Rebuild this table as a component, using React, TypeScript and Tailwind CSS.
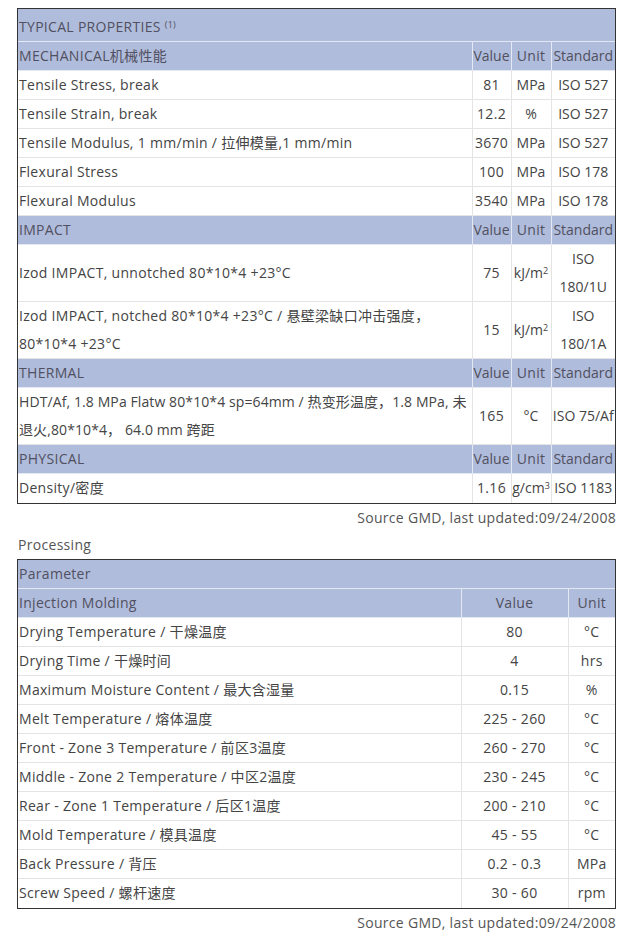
import React from "react";

const FONT = { fontFamily: '"Open Sans", "Noto Sans CJK SC", sans-serif' };

type Row =
  | { kind: "head"; label: React.ReactNode }
  | { kind: "data"; label: React.ReactNode; value: string; unit: React.ReactNode; std: React.ReactNode; tall?: boolean; tight?: boolean };

const rows1: Row[] = [
  { kind: "head", label: "MECHANICAL机械性能" },
  { kind: "data", label: "Tensile Stress, break", value: "81", unit: "MPa", std: "ISO 527" },
  { kind: "data", label: "Tensile Strain, break", value: "12.2", unit: "%", std: "ISO 527" },
  { kind: "data", label: "Tensile Modulus, 1 mm/min / 拉伸模量,1 mm/min", value: "3670", unit: "MPa", std: "ISO 527" },
  { kind: "data", label: "Flexural Stress", value: "100", unit: "MPa", std: "ISO 178" },
  { kind: "data", label: "Flexural Modulus", value: "3540", unit: "MPa", std: "ISO 178" },
  { kind: "head", label: "IMPACT" },
  {
    kind: "data",
    label: "Izod IMPACT, unnotched 80*10*4 +23°C",
    value: "75",
    unit: (
      <>
        kJ/m<sup className="text-[9px]">2</sup>
      </>
    ),
    std: (
      <>
        ISO
        <br />
        180/1U
      </>
    ),
    tall: true,
  },
  {
    kind: "data",
    label: (
      <>
        Izod IMPACT, notched 80*10*4 +23°C / 悬壁梁缺口冲击强度，
        <br />
        80*10*4 +23°C
      </>
    ),
    value: "15",
    unit: (
      <>
        kJ/m<sup className="text-[9px]">2</sup>
      </>
    ),
    std: (
      <>
        ISO
        <br />
        180/1A
      </>
    ),
    tall: true,
  },
  { kind: "head", label: "THERMAL" },
  {
    kind: "data",
    label: (
      <>
        HDT/Af, 1.8 MPa Flatw 80*10*4 sp=64mm / 热变形温度，1.8 MPa, 未
        <br />
        退火,80*10*4， 64.0 mm 跨距
      </>
    ),
    value: "165",
    unit: "°C",
    std: "ISO 75/Af",
    tall: true,
    tight: true,
  },
  { kind: "head", label: "PHYSICAL" },
  {
    kind: "data",
    label: "Density/密度",
    value: "1.16",
    unit: (
      <>
        g/cm<sup className="text-[9px]">3</sup>
      </>
    ),
    std: "ISO 1183",
  },
];

const rows2: [string, string, string][] = [
  ["Drying Temperature / 干燥温度", "80", "°C"],
  ["Drying Time / 干燥时间", "4", "hrs"],
  ["Maximum Moisture Content / 最大含湿量", "0.15", "%"],
  ["Melt Temperature / 熔体温度", "225 - 260", "°C"],
  ["Front - Zone 3 Temperature / 前区3温度", "260 - 270", "°C"],
  ["Middle - Zone 2 Temperature / 中区2温度", "230 - 245", "°C"],
  ["Rear - Zone 1 Temperature / 后区1温度", "200 - 210", "°C"],
  ["Mold Temperature / 模具温度", "45 - 55", "°C"],
  ["Back Pressure / 背压", "0.2 - 0.3", "MPa"],
  ["Screw Speed / 螺杆速度", "30 - 60", "rpm"],
];

export default function App() {
  return (
    <div className="bg-white text-[14px] leading-[28px] tracking-[0.3px] text-[#444] pt-[8px]" style={FONT}>
      {/* Table 1 */}
      <div className="ml-[17px] w-[599px] border border-[#333]">
        <table className="w-full table-fixed border-collapse">
          <colgroup>
            <col className="w-[454px]" />
            <col className="w-[39px]" />
            <col className="w-[40px]" />
            <col />
          </colgroup>
          <tbody>
            <tr className="bg-[#b0bcdc] text-[#505060]">
              <td colSpan={4} className="h-[32px] px-[1px] pt-[4px] border-b border-[#e4e8f2] align-middle">
                TYPICAL PROPERTIES <sup className="text-[9px]">(1)</sup>
              </td>
            </tr>
            {rows1.map((r, i) => {
              const last = i === rows1.length - 1;
              const bb = last ? "" : "border-b";
              if (r.kind === "head") {
                return (
                  <tr key={i} className="bg-[#b0bcdc] text-[#505060]">
                    <td className={`px-[1px] h-[29px] ${bb} border-r border-[#e4e8f2] whitespace-nowrap`}>{r.label}</td>
                    <td className={`text-center tracking-normal h-[29px] ${bb} border-r border-[#e4e8f2] whitespace-nowrap`}>Value</td>
                    <td className={`text-center h-[29px] ${bb} border-r border-[#e4e8f2] whitespace-nowrap`}>Unit</td>
                    <td className={`text-center tracking-normal h-[29px] ${bb} border-[#e4e8f2] whitespace-nowrap`}>Standard</td>
                  </tr>
                );
              }
              return (
                <tr key={i}>
                  <td
                    className={`px-[1px] ${r.tall ? "h-[57px]" : "h-[29px]"} ${r.tight ? "tracking-[0.1px]" : ""} ${bb} border-r border-[#e4e4e4] whitespace-nowrap`}
                  >
                    {r.label}
                  </td>
                  <td className={`text-center ${bb} border-r border-[#e4e4e4] whitespace-nowrap`}>{r.value}</td>
                  <td className={`text-center tracking-normal ${bb} border-r border-[#e4e4e4] whitespace-nowrap`}>{r.unit}</td>
                  <td className={`text-center tracking-normal ${bb} border-[#e4e4e4] whitespace-nowrap`}>{r.std}</td>
                </tr>
              );
            })}
          </tbody>
        </table>
      </div>
      <div className="w-[616px] text-right text-[#555] leading-[27px]">Source GMD, last updated:09/24/2008</div>
      <div className="pl-[18px] text-[#555]">Processing</div>

      {/* Table 2 */}
      <div className="ml-[17px] w-[599px] border border-[#333]">
        <table className="w-full table-fixed border-collapse">
          <colgroup>
            <col className="w-[443px]" />
            <col className="w-[107px]" />
            <col />
          </colgroup>
          <tbody>
            <tr className="bg-[#b0bcdc] text-[#505060]">
              <td colSpan={3} className="h-[29px] px-[1px] border-b border-[#e4e8f2]">
                Parameter
              </td>
            </tr>
            <tr className="bg-[#b0bcdc] text-[#505060]">
              <td className="h-[29px] px-[1px] border-b border-r border-[#e4e8f2]">Injection Molding</td>
              <td className="text-center border-b border-r border-[#e4e8f2]">Value</td>
              <td className="text-center border-b border-[#e4e8f2]">Unit</td>
            </tr>
            {rows2.map(([label, value, unit], i) => {
              const bb = i === rows2.length - 1 ? "" : "border-b";
              return (
                <tr key={i}>
                  <td className={`h-[29px] px-[1px] ${bb} border-r border-[#e4e4e4] whitespace-nowrap`}>{label}</td>
                  <td className={`text-center ${bb} border-r border-[#e4e4e4]`}>{value}</td>
                  <td className={`text-center ${bb} border-[#e4e4e4]`}>{unit}</td>
                </tr>
              );
            })}
          </tbody>
        </table>
      </div>
      <div className="w-[616px] text-right text-[#555]">Source GMD, last updated:09/24/2008</div>
    </div>
  );
}
